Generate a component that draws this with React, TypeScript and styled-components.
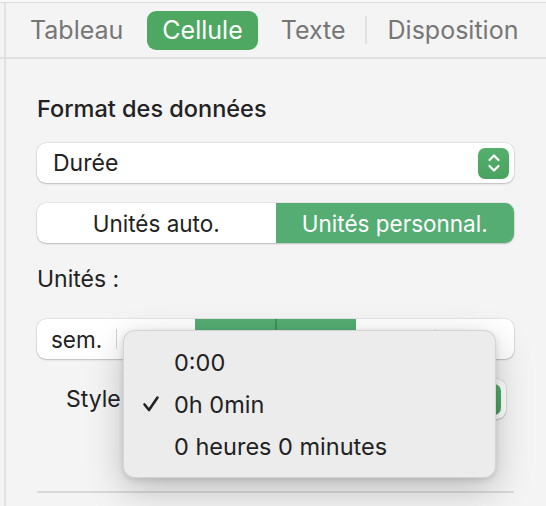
import React, { FC } from "react";
import styled, { createGlobalStyle } from "styled-components";

const GlobalStyle = createGlobalStyle`
  html, body {
    margin: 0;
    padding: 0;
    background: #f4f4f4;
    font-family: Inter, "Noto Sans", "Liberation Sans", sans-serif;
    -webkit-font-smoothing: antialiased;
  }
`;

const green = "#4ea862";
const segGreen = "#55ad73";

const Page = styled.div`
  position: relative;
  width: 546px;
  height: 506px;
  overflow: hidden;
  background: linear-gradient(
    to right,
    #f4f4f4 4px,
    #e1e1e1 4px,
    #e1e1e1 6px,
    #f4f4f4 6px
  );
`;

const TopStrip = styled.div`
  height: 2px;
  background: #f8f8f8;
  border-bottom: 1px solid #dedede;
`;

const TabBar = styled.div`
  height: 54px;
  display: flex;
  align-items: center;
  padding-left: 30px;
  border-bottom: 2px solid #e0e0e0;
`;

const Tab = styled.div<{ $active?: boolean }>`
  font-size: 25px;
  line-height: 39px;
  height: 39px;
  padding: 0 ${(p) => (p.$active ? "15px" : "0")};
  margin-right: ${(p) => (p.$active ? "23px" : "24px")};
  border-radius: 9px;
  color: ${(p) => (p.$active ? "#fff" : "#767676")};
  background: ${(p) => (p.$active ? green : "transparent")};
`;

const TabSep = styled.div`
  width: 2px;
  height: 28px;
  background: #e2e2e2;
  margin: 0 21px 0 -5px;
`;

const Content = styled.div`
  padding: 0 32px 0 37px;
`;

const Title = styled.div`
  margin-top: 37px;
  font-size: 23.5px;
  line-height: 26px;
  font-weight: 500;
  color: #222;
`;

const Label = styled.div`
  margin-top: 23px;
  font-size: 23px;
  line-height: 26px;
  color: #222;
`;

const Popup = styled.div<{ $top: number }>`
  margin-top: ${(p) => p.$top}px;
  height: 40px;
  box-sizing: border-box;
  background: #fff;
  border-radius: 9px;
  box-shadow: 0 0 0 0.5px rgba(0, 0, 0, 0.12), 0 1px 2px rgba(0, 0, 0, 0.18);
  display: flex;
  align-items: center;
  justify-content: space-between;
  padding: 0 5px 0 16px;
  font-size: 23px;
  color: #222;
`;

const Stepper = styled.div`
  width: 31px;
  height: 31px;
  border-radius: 7px;
  background: linear-gradient(#55b06d, #4aa25f);
  display: flex;
  align-items: center;
  justify-content: center;
`;

const Segmented = styled.div<{ $top: number }>`
  margin-top: ${(p) => p.$top}px;
  height: 40px;
  display: flex;
  background: #fff;
  border-radius: 9px;
  overflow: hidden;
  box-shadow: 0 0 0 0.5px rgba(0, 0, 0, 0.12), 0 1px 2px rgba(0, 0, 0, 0.18);
`;

const Segment = styled.div<{ $on?: boolean; $sep?: "light" | "dark" }>`
  flex: 1;
  position: relative;
  display: flex;
  align-items: center;
  justify-content: center;
  font-size: 22.5px;
  color: ${(p) => (p.$on ? "#fff" : "#222")};
  background: ${(p) => (p.$on ? segGreen : "transparent")};
  border-left: ${(p) =>
    p.$sep === "dark" ? "2px solid #3f9157" : "0"};
  &::before {
    content: "";
    display: ${(p) => (p.$sep === "light" ? "block" : "none")};
    position: absolute;
    left: 0;
    top: 10px;
    width: 1px;
    height: 20px;
    background: #d4d4d4;
  }
`;

const StyleRow = styled.div`
  margin-top: 20px;
  display: flex;
  align-items: center;
  padding: 0 8px 0 29px;
  gap: 14px;
`;

const StyleLabel = styled.div`
  font-size: 23px;
  color: #222;
`;

const StylePopup = styled(Popup)`
  flex: 1;
  margin-top: 0;
  justify-content: flex-end;
`;

const Divider = styled.div`
  margin-top: 72px;
  height: 2px;
  background: #d9d9d9;
`;

const Menu = styled.div`
  position: absolute;
  left: 123px;
  top: 330px;
  width: 373px;
  box-sizing: border-box;
  padding: 10px 0;
  background: #ececec;
  border-radius: 12px;
  border: 1px solid rgba(0, 0, 0, 0.1);
  box-shadow: 0 12px 36px rgba(0, 0, 0, 0.22), 0 2px 6px rgba(0, 0, 0, 0.12);
`;

const MenuItem = styled.div`
  height: 42px;
  display: flex;
  align-items: center;
  padding-left: 18px;
  font-size: 23.5px;
  color: #222;
`;

const CheckSlot = styled.div`
  width: 32px;
  display: flex;
  align-items: center;
`;

const Chevrons: FC = () => (
  <svg width="14" height="22" viewBox="0 0 14 22" fill="none">
    <path
      d="M2.5 8 L7 3.5 L11.5 8 M2.5 14 L7 18.5 L11.5 14"
      stroke="#fff"
      strokeWidth="2.2"
      strokeLinecap="round"
      strokeLinejoin="round"
    />
  </svg>
);

const Check: FC = () => (
  <svg width="18" height="18" viewBox="0 0 18 18" fill="none">
    <path
      d="M2.5 9.5 L7 15 L15.5 2.5"
      stroke="#222"
      strokeWidth="2.6"
      strokeLinecap="round"
      strokeLinejoin="round"
    />
  </svg>
);

const units = ["sem.", "j", "h", "min", "s", "ms"];
const activeUnits = ["h", "min"];
const menuItems = ["0:00", "0h 0min", "0 heures 0 minutes"];

const App: FC = () => {
  return (
    <Page>
      <GlobalStyle />
      <TopStrip />
      <TabBar>
        <Tab>Tableau</Tab>
        <Tab $active>Cellule</Tab>
        <Tab>Texte</Tab>
        <TabSep />
        <Tab>Disposition</Tab>
      </TabBar>
      <Content>
        <Title>Format des données</Title>
        <Popup $top={21}>
          <span>Durée</span>
          <Stepper>
            <Chevrons />
          </Stepper>
        </Popup>
        <Segmented $top={20}>
          <Segment>Unités auto.</Segment>
          <Segment $on>Unités personnal.</Segment>
        </Segmented>
        <Label>Unités :</Label>
        <Segmented $top={27}>
          {units.map((u, i) => {
            const on = activeUnits.includes(u);
            const prevOn = i > 0 && activeUnits.includes(units[i - 1]);
            let sep: "light" | "dark" | undefined;
            if (i > 0 && on && prevOn) sep = "dark";
            else if (i > 0 && !on && !prevOn) sep = "light";
            return (
              <Segment key={u} $on={on} $sep={sep}>
                {u}
              </Segment>
            );
          })}
        </Segmented>
        <StyleRow>
          <StyleLabel>Style</StyleLabel>
          <StylePopup $top={0}>
            <Stepper>
              <Chevrons />
            </Stepper>
          </StylePopup>
        </StyleRow>
        <Divider />
      </Content>
      <Menu>
        {menuItems.map((m) => (
          <MenuItem key={m}>
            <CheckSlot>{m === "0h 0min" ? <Check /> : null}</CheckSlot>
            {m}
          </MenuItem>
        ))}
      </Menu>
    </Page>
  );
};

export default App;
